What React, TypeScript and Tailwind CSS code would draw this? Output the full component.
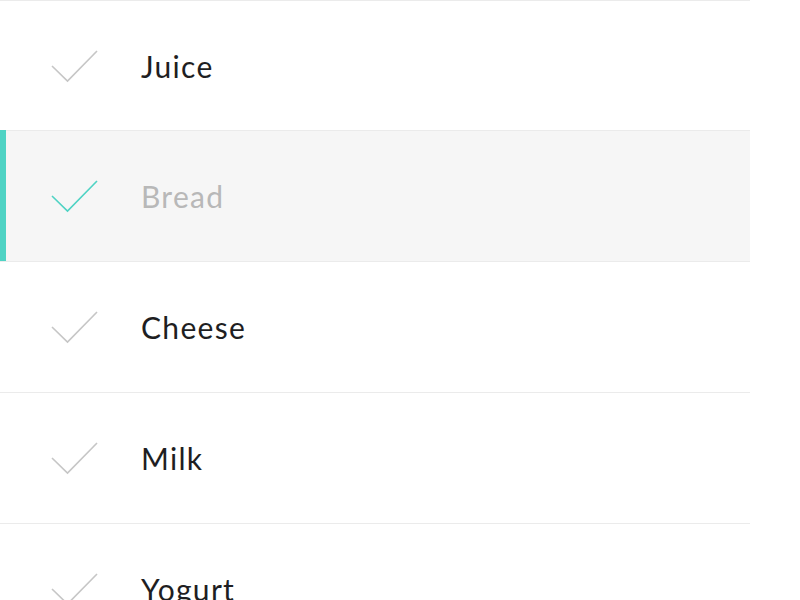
const items = [
  { name: 'Juice', done: false },
  { name: 'Bread', done: true },
  { name: 'Cheese', done: false },
  { name: 'Milk', done: false },
  { name: 'Yogurt', done: false },
];

function Check({ active }: { active: boolean }) {
  return (
    <svg width="50" height="34" viewBox="0 0 50 34" fill="none" className="shrink-0">
      <path
        d="M2 17 L17.5 32 L47 2"
        stroke={active ? '#4fd3c4' : '#c6c6c6'}
        strokeWidth="1.6"
      />
    </svg>
  );
}

export default function App() {
  return (
    <div className="w-[800px] h-[600px] overflow-hidden bg-white font-['Lato','Noto_Sans',sans-serif]">
      <ul className="w-[750px]">
        {items.map((item, i) => (
          <li
            key={item.name}
            className={`relative flex items-center border-t border-[#ebebeb] ${
              i === 0 ? 'h-[130px]' : 'h-[131px]'
            } ${item.done ? 'bg-[#f6f6f6]' : 'bg-white'}`}
          >
            {item.done && (
              <span className="absolute left-0 top-[-1px] bottom-0 w-[6px] bg-[#4fd3c4]" />
            )}
            <div className="ml-[50px] w-[91px] flex items-center">
              <Check active={item.done} />
            </div>
            <span
              className={`text-[30px] leading-none tracking-[1.3px] ${
                item.done ? 'text-[#b8b8b8]' : 'text-[#1e1e22]'
              }`}
            >
              {item.name}
            </span>
          </li>
        ))}
      </ul>
    </div>
  );
}
